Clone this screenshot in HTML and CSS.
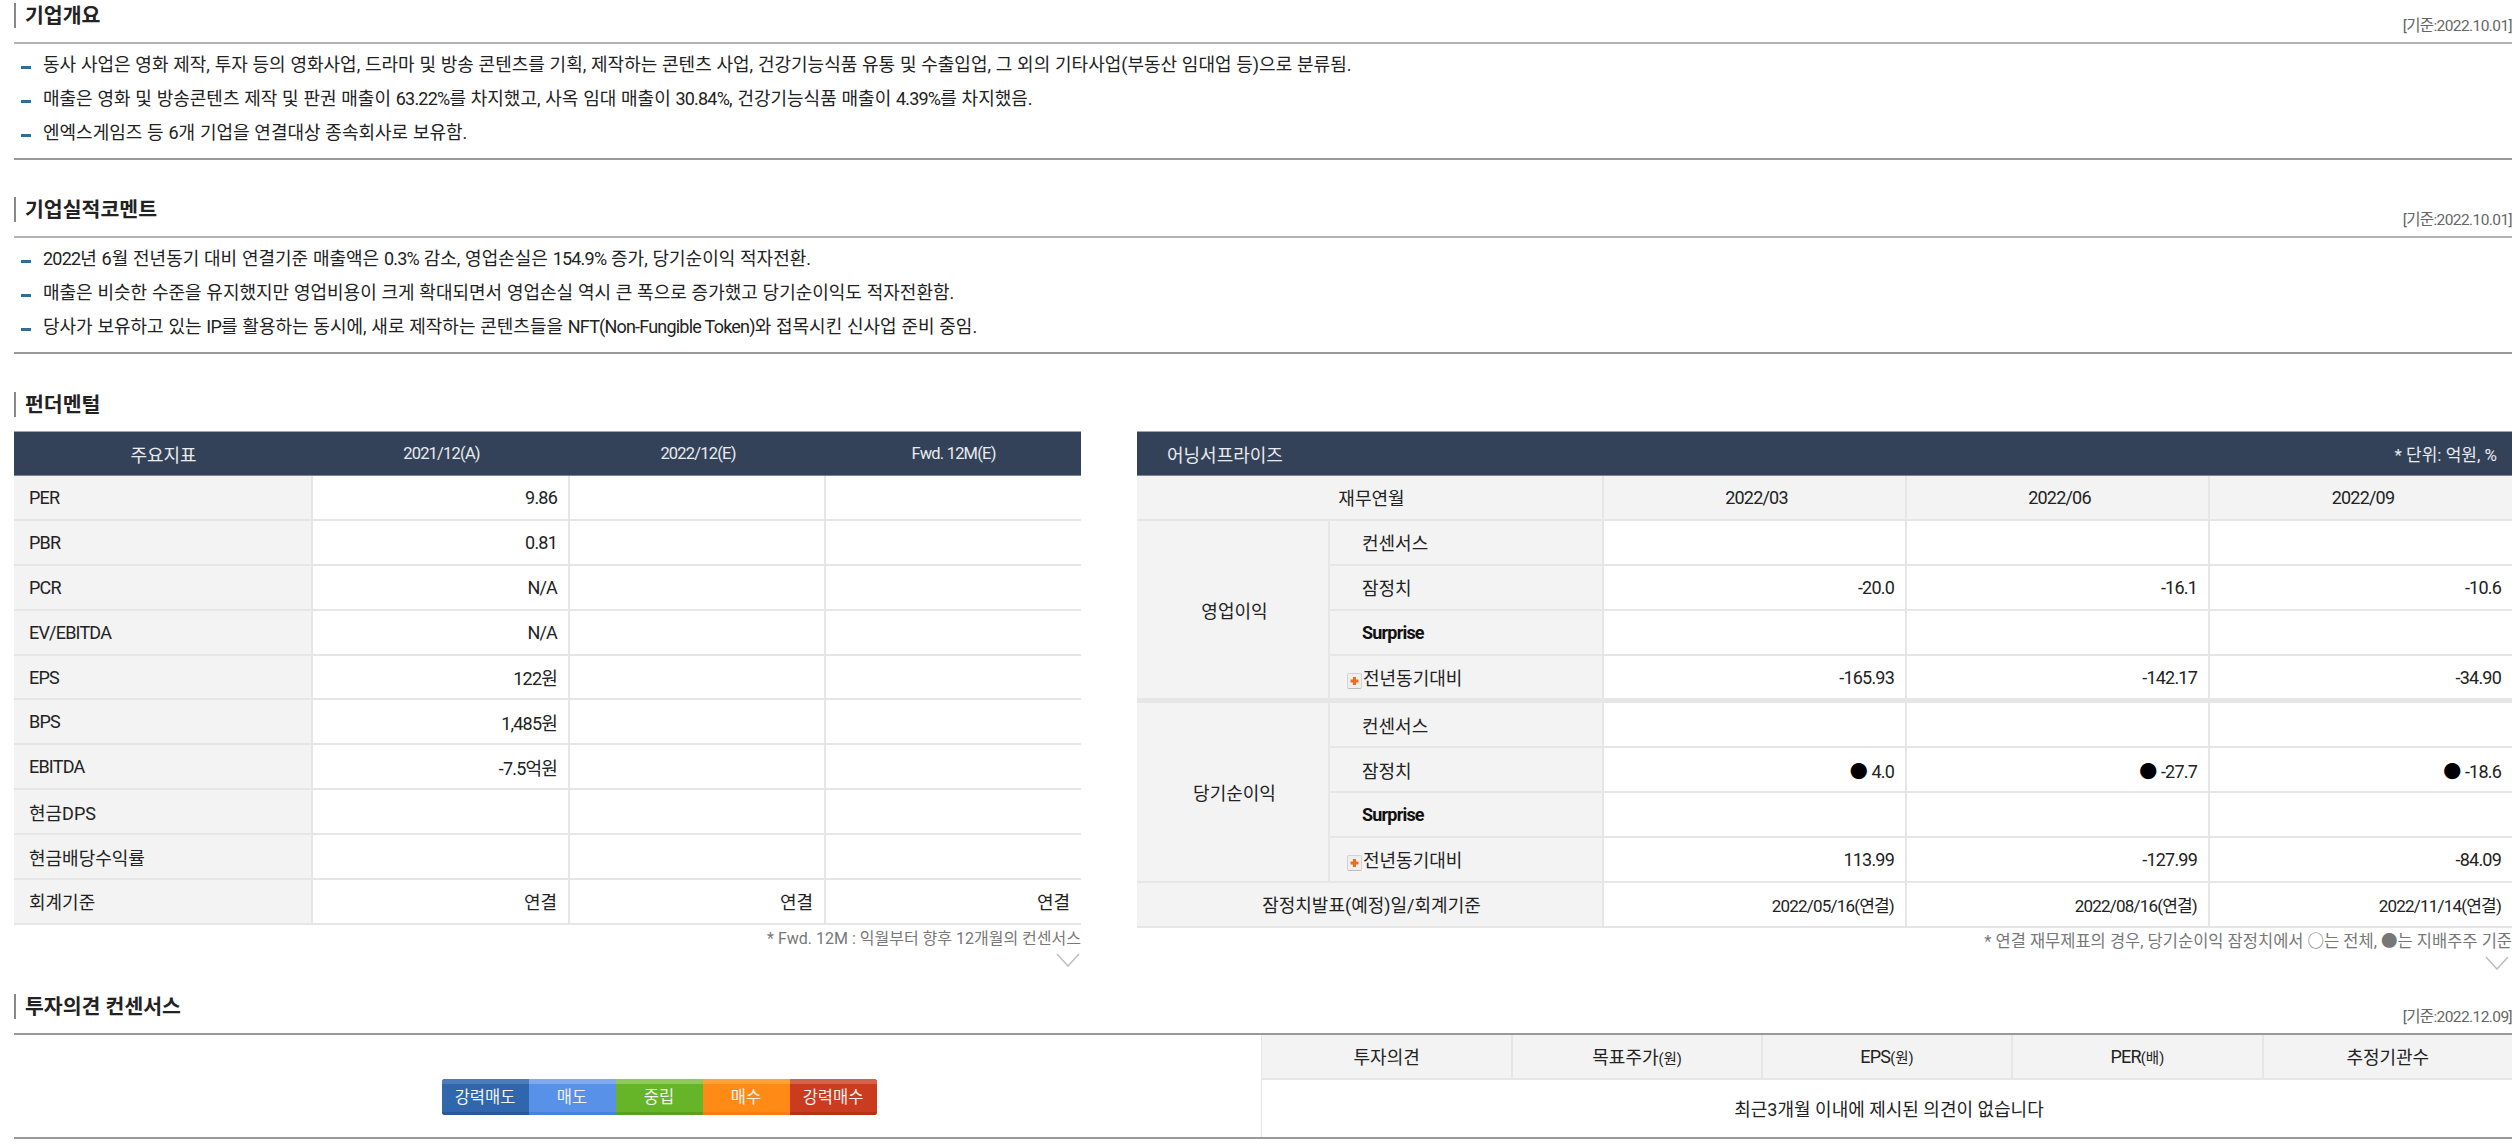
FILE: index.html
```html
<!DOCTYPE html>
<html lang="ko">
<head>
<meta charset="utf-8">
<title>기업정보</title>
<link rel="stylesheet" href="styles.css">
</head>
<body>
<section class="sec sec-first">
  <div class="head"><h2 class="title">기업개요</h2><span class="date">[기준:2022.10.01]</span></div>
  <ul class="notes">
    <li>동사 사업은 영화 제작, 투자 등의 영화사업, 드라마 및 방송 콘텐츠를 기획, 제작하는 콘텐츠 사업, 건강기능식품 유통 및 수출입업, 그 외의 기타사업(부동산 임대업 등)으로 분류됨.</li>
    <li>매출은 영화 및 방송콘텐츠 제작 및 판권 매출이 <span class="n">63.22%</span>를 차지했고, 사옥 임대 매출이 <span class="n">30.84%</span>, 건강기능식품 매출이 <span class="n">4.39%</span>를 차지했음.</li>
    <li>엔엑스게임즈 등 6개 기업을 연결대상 종속회사로 보유함.</li>
  </ul>
</section>
<section class="sec sec-next">
  <div class="head"><h2 class="title">기업실적코멘트</h2><span class="date">[기준:2022.10.01]</span></div>
  <ul class="notes">
    <li><span class="n">2022</span>년 6월 전년동기 대비 연결기준 매출액은 <span class="n">0.3%</span> 감소, 영업손실은 <span class="n">154.9%</span> 증가, 당기순이익 적자전환.</li>
    <li>매출은 비슷한 수준을 유지했지만 영업비용이 크게 확대되면서 영업손실 역시 큰 폭으로 증가했고 당기순이익도 적자전환함.</li>
    <li>당사가 보유하고 있는 <span class="n">IP</span>를 활용하는 동시에, 새로 제작하는 콘텐츠들을 <span class="n">NFT(Non-Fungible Token)</span>와 접목시킨 신사업 준비 중임.</li>
  </ul>
</section>
<section class="sec sec-fund">
  <div class="head head-plain"><h2 class="title">펀더멘털</h2></div>
  <div class="fund">
    <div class="fund-left">
      <table class="grid">
        <colgroup><col class="c299"><col class="c257"><col class="c256"><col class="c255"></colgroup>
        <thead><tr class="dark"><th>주요지표</th><th class="n">2021/12(A)</th><th class="n">2022/12(E)</th><th class="n">Fwd. 12M(E)</th></tr></thead>
        <tbody>
          <tr><th class="lbl n">PER</th><td class="n">9.86</td><td></td><td></td></tr>
          <tr><th class="lbl n">PBR</th><td class="n">0.81</td><td></td><td></td></tr>
          <tr><th class="lbl n">PCR</th><td class="n">N/A</td><td></td><td></td></tr>
          <tr><th class="lbl n">EV/EBITDA</th><td class="n">N/A</td><td></td><td></td></tr>
          <tr><th class="lbl n">EPS</th><td class="n">122원</td><td></td><td></td></tr>
          <tr><th class="lbl n">BPS</th><td class="n">1,485원</td><td></td><td></td></tr>
          <tr><th class="lbl n">EBITDA</th><td class="n">-7.5억원</td><td></td><td></td></tr>
          <tr><th class="lbl">현금DPS</th><td></td><td></td><td></td></tr>
          <tr><th class="lbl">현금배당수익률</th><td></td><td></td><td></td></tr>
          <tr><th class="lbl">회계기준</th><td>연결</td><td>연결</td><td>연결</td></tr>
        </tbody>
      </table>
      <p class="foot">* Fwd. 12M : 익월부터 향후 12개월의 컨센서스</p>
      <svg class="chev" viewBox="0 0 24 14" aria-hidden="true"><polyline points="1,1 12,13 23,1"/></svg>
    </div>
    <div class="fund-right">
      <table class="grid">
        <colgroup><col class="c193"><col class="c274"><col class="c303"><col class="c303"><col class="c302"></colgroup>
        <thead><tr class="dark"><th colspan="5" class="dark-bar"><div class="bar"><span>어닝서프라이즈</span><span class="unit">* 단위: 억원, %</span></div></th></tr></thead>
        <tbody>
          <tr class="sub"><th colspan="2">재무연월</th><th class="n">2022/03</th><th class="n">2022/06</th><th class="n">2022/09</th></tr>
          <tr><th rowspan="4" class="grp">영업이익</th><th class="sublbl">컨센서스</th><td></td><td></td><td></td></tr>
          <tr><th class="sublbl">잠정치</th><td class="n">-20.0</td><td class="n">-16.1</td><td class="n">-10.6</td></tr>
          <tr><th class="sublbl strong n">Surprise</th><td></td><td></td><td></td></tr>
          <tr><th class="sublbl iconed"><span class="plus"><svg viewBox="0 0 13 14" aria-hidden="true"><path d="M6.5 3v8M2.5 7h8"/></svg></span>전년동기대비</th><td class="n">-165.93</td><td class="n">-142.17</td><td class="n">-34.90</td></tr>
          <tr class="split"><th rowspan="4" class="grp">당기순이익</th><th class="sublbl">컨센서스</th><td></td><td></td><td></td></tr>
          <tr><th class="sublbl">잠정치</th><td class="n"><span class="dot">●</span> 4.0</td><td class="n"><span class="dot">●</span> -27.7</td><td class="n"><span class="dot">●</span> -18.6</td></tr>
          <tr><th class="sublbl strong n">Surprise</th><td></td><td></td><td></td></tr>
          <tr><th class="sublbl iconed"><span class="plus"><svg viewBox="0 0 13 14" aria-hidden="true"><path d="M6.5 3v8M2.5 7h8"/></svg></span>전년동기대비</th><td class="n">113.99</td><td class="n">-127.99</td><td class="n">-84.09</td></tr>
          <tr class="sub-left"><th colspan="2">잠정치발표(예정)일/회계기준</th><td class="n">2022/05/16(연결)</td><td class="n">2022/08/16(연결)</td><td class="n">2022/11/14(연결)</td></tr>
        </tbody>
      </table>
      <p class="foot foot-r">* 연결 재무제표의 경우, 당기순이익 잠정치에서 ○는 전체, ●는 지배주주 기준</p>
      <svg class="chev chev-r" viewBox="0 0 24 14" aria-hidden="true"><polyline points="1,1 12,13 23,1"/></svg>
    </div>
  </div>
</section>
<section class="sec sec-cons">
  <div class="head head-cons"><h2 class="title">투자의견 컨센서스</h2><span class="date">[기준:2022.12.09]</span></div>
  <div class="cons">
    <div class="cons-left">
      <div class="scale">
        <span class="sc s1">강력매도</span><span class="sc s2">매도</span><span class="sc s3">중립</span><span class="sc s4">매수</span><span class="sc s5">강력매수</span>
      </div>
    </div>
    <table class="grid cons-table">
      <colgroup><col class="c251"><col class="c249"><col class="c250"><col class="c250"><col class="c248"></colgroup>
      <thead><tr class="sub"><th>투자의견</th><th>목표주가<small>(원)</small></th><th><span class="n">EPS</span><small>(원)</small></th><th><span class="n">PER</span><small>(배)</small></th><th>추정기관수</th></tr></thead>
      <tbody><tr><td colspan="5" class="empty">최근3개월 이내에 제시된 의견이 없습니다</td></tr></tbody>
    </table>
  </div>
</section>
</body>
</html>
```
FILE: styles.css
```css
* { box-sizing: border-box; }
html, body { margin: 0; padding: 0; background: #fff; }
body {
  padding: 3px 6px 0 14px;
  font-family: "Roboto", "Noto Sans CJK KR", sans-serif;
  font-size: 18px;
  color: #222;
  overflow: hidden;
  height: 1144px;
}
.n { letter-spacing: -.8px; }
.sec-next { margin-top: 37px; }
.sec-fund { margin-top: 38px; }
.sec-cons { margin-top: 24px; }

.head {
  display: flex;
  justify-content: space-between;
  align-items: flex-start;
  height: 41px;
  border-bottom: 2px solid #b4b4b4;
}
.head-plain { border-bottom: 0; height: 39px; }
.head-cons { border-bottom: 0; height: 39px; }
.title {
  margin: 0;
  height: 25px;
  line-height: 26px;
  padding-left: 9px;
  border-left: 2px solid #888;
  font-size: 20.5px;
  font-weight: 700;
  color: #222;
}
.date {
  font-size: 15.5px;
  line-height: 20px;
  margin-top: 13px;
  color: #666;
  letter-spacing: -.6px;
}

.notes {
  list-style: none;
  margin: 0;
  padding: 4px 0 8px;
  border-bottom: 2px solid #999;
}
.notes li {
  display: block;
  height: 34px;
  line-height: 34px;
  padding-left: 29px;
  position: relative;
  white-space: pre;
  word-spacing: .3px;
}
.notes li::before {
  content: "";
  position: absolute;
  left: 7px;
  top: 18px;
  width: 10px;
  height: 3px;
  background: #2f6d9b;
}

.fund { display: flex; justify-content: space-between; }
.fund-left { width: 1067px; display: flex; flex-direction: column; align-items: flex-end; }
.fund-right { width: 1375px; display: flex; flex-direction: column; align-items: flex-end; }

.grid {
  width: 100%;
  table-layout: fixed;
  border-collapse: separate;
  border-spacing: 0;
}
.c299 { width: 299px; } .c257 { width: 257px; } .c256 { width: 256px; } .c255 { width: 255px; }
.c193 { width: 193px; } .c274 { width: 274px; } .c303 { width: 303px; } .c302 { width: 302px; }
.c251 { width: 251px; } .c249 { width: 249px; } .c250 { width: 250px; } .c248 { width: 248px; }

.grid th, .grid td {
  height: 44.9px;
  padding: 0 11px 0 15px;
  font-weight: 400;
  border-bottom: 2px solid #e6e6e6;
  border-right: 2px solid #e6e6e6;
  white-space: nowrap;
}
.grid tr > :last-child { border-right: 0; }
.grid td { text-align: right; background: #fff; }
.grid .lbl { text-align: left; background: #f3f3f3; }

.grid .dark th {
  height: 45px;
  padding: 0 12px;
  background: #344259;
  color: #e9ebee;
  text-align: center;
  border-top: 1px solid #a0a4aa;
  border-bottom: 1px solid #7c8490;
  border-right: 0;
}
.grid .dark th.n { font-size: 16.5px; }
.bar { display: flex; justify-content: space-between; padding: 0 3px 0 18px; }
.unit { font-size: 17px; }

.sub th { background: #f3f3f3; text-align: center; }
.sub-left th { background: #f3f3f3; text-align: center; }
.sub-left td { font-size: 17px; }
.grid .grp { background: #f3f3f3; text-align: center; }
.grid .sublbl { background: #f3f3f3; text-align: left; padding-left: 32px; }
.grid .iconed { padding-left: 17px; }
.grid .strong { font-weight: 700; color: #111; }
.split > * { border-top: 3px solid #e6e6e6; }
.grid .split > * { height: 47.8px; }

.plus {
  display: inline-block;
  width: 15px;
  height: 16px;
  margin-right: 1px;
  vertical-align: -4px;
  background: #efefef;
  border: 1px solid #d2d2d2;
  border-bottom-color: #bbb;
  border-radius: 2px;
}
.plus svg { display: block; width: 13px; height: 14px; }
.plus path { fill: none; stroke: #f26a1b; stroke-width: 3; }
.dot { color: #000; letter-spacing: 0; }

.foot {
  margin: 4px 0 0;
  font-size: 16px;
  line-height: 20px;
  color: #777;
}
.foot-r { font-size: 16.5px; }
.chev { display: block; width: 24px; height: 14px; margin: 4px 1px 0 0; }
.chev-r { margin-right: 3px; }
.chev polyline { fill: none; stroke: #bdbdbd; stroke-width: 1.5; }

.cons {
  display: flex;
  border-top: 2px solid #999;
  border-bottom: 2px solid #999;
  height: 106px;
}
.cons-left {
  width: 1248px;
  flex: none;
  display: flex;
  align-items: center;
  justify-content: center;
  padding: 22px 0 0 43px;
  border-right: 1px solid #e6e6e6;
}
.scale { display: flex; height: 36px; border-radius: 3px; overflow: hidden; }
.sc {
  width: 87px;
  text-align: center;
  color: #f2f2f2;
  font-size: 16.5px;
  border-top: 5px solid;
  border-bottom: 3px solid;
  line-height: 27px;
}
.s1 { background: #3066ab; border-top-color: #4c7cbb; border-bottom-color: #2a5a96; }
.s2 { background: #5791e8; border-top-color: #7dabee; border-bottom-color: #4a80e0; }
.s3 { background: #66b528; border-top-color: #8fc95a; border-bottom-color: #599f20; }
.s4 { background: #ff8a16; border-top-color: #ffa236; border-bottom-color: #ff7a10; }
.s5 { background: #cb3b20; border-top-color: #d5624b; border-bottom-color: #b83018; }

.cons-table { flex: 1; min-width: 0; }
.cons-table small { font-size: 14.5px; }
.grid.cons-table .sub th { height: 45px; padding: 0 8px; }
.grid .empty { height: 57px; text-align: center; border-bottom: 0; }
```
